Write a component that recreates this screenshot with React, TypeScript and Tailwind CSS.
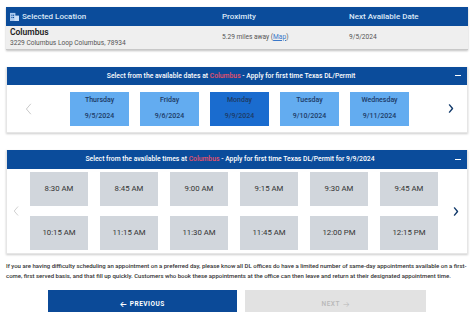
import React from "react";

const font = { fontFamily: "Roboto, 'Liberation Sans', sans-serif" };

function ChevLeft({ cls }: { cls: string }) {
  return (
    <svg viewBox="0 0 10 16" className={cls} fill="none" stroke="currentColor" strokeWidth="1.4" strokeLinecap="round" strokeLinejoin="round">
      <path d="M8 1 L2 8 L8 15" />
    </svg>
  );
}
function ChevRight({ cls }: { cls: string }) {
  return (
    <svg viewBox="0 0 10 16" className={cls} fill="none" stroke="currentColor" strokeWidth="2.4" strokeLinecap="round" strokeLinejoin="round">
      <path d="M2.5 2 L7.5 8 L2.5 14" />
    </svg>
  );
}

const dates = [
  { d: "Thursday", t: "9/5/2024" },
  { d: "Friday", t: "9/6/2024" },
  { d: "Monday", t: "9/9/2024", sel: true },
  { d: "Tuesday", t: "9/10/2024" },
  { d: "Wednesday", t: "9/11/2024" },
];

const times = [
  "8:30 AM", "8:45 AM", "9:00 AM", "9:15 AM", "9:30 AM", "9:45 AM",
  "10:15 AM", "11:15 AM", "11:30 AM", "11:45 AM", "12:00 PM", "12:15 PM",
];

export default function App() {
  return (
    <div className="w-[474px] h-[312px] overflow-hidden bg-white px-[6px] pt-[7px]" style={font}>
      {/* Location table */}
      <div className="shadow-[0_1px_2px_rgba(0,0,0,0.25)]">
        <div className="h-[19px] bg-[#0b4c9b] grid grid-cols-[212px_127px_1fr] items-center pl-[4px] text-[8px] font-medium text-[#dbe8f8]">
          <div className="flex items-center gap-[3px]">
            <svg viewBox="0 0 10 10" className="w-[9px] h-[9px]">
              <rect x="0" y="1" width="6" height="9" fill="#a9c8ee" />
              <rect x="5" y="4" width="5" height="6" fill="#c9ddf6" />
              <rect x="1.5" y="3" width="1.2" height="1.2" fill="#0b4c9b" />
              <rect x="3.3" y="3" width="1.2" height="1.2" fill="#0b4c9b" />
              <rect x="1.5" y="5.5" width="1.2" height="1.2" fill="#0b4c9b" />
              <rect x="3.3" y="5.5" width="1.2" height="1.2" fill="#0b4c9b" />
            </svg>
            <span>Selected Location</span>
          </div>
          <div>Proximity</div>
          <div>Next Available Date</div>
        </div>
        <div className="h-[24px] bg-[#efefef] grid grid-cols-[212px_127px_1fr] items-center pl-[4px] border-b border-[#c8c8c8]">
          <div className="flex flex-col leading-none">
            <span className="text-[8.5px] font-semibold text-[#222]">Columbus</span>
            <span className="text-[6.6px] text-[#555] mt-[3px]">3229 Columbus Loop Columbus, 78934</span>
          </div>
          <div className="text-[6.6px] text-[#555]">
            5.29 miles away (<span className="text-[#3a78c9] underline">Map</span>)
          </div>
          <div className="text-[6.6px] text-[#555]">9/5/2024</div>
        </div>
      </div>

      {/* Dates panel */}
      <div className="mt-[17px] shadow-[0_1px_2px_rgba(0,0,0,0.2)] border-x border-b border-[#e6e6e6]">
        <div className="h-[18px] bg-[#0b4c9b] relative flex items-center justify-center pr-[12px] text-[6.8px] font-medium text-white">
          <span>
            Select from the available dates at <span className="text-[#e8506a]">Columbus</span> - Apply for first time Texas DL/Permit
          </span>
          <span className="absolute right-[6px] top-[8px] w-[6px] h-[1.2px] bg-white" />
        </div>
        <div className="h-[47px] flex items-center">
          <div className="w-[63px] pl-[18px] text-[#c8c8c8]">
            <ChevLeft cls="w-[7px] h-[14px]" />
          </div>
          <div className="flex gap-[11px]">
            {dates.map((x) => (
              <div
                key={x.d}
                className={`w-[59px] h-[34px] flex flex-col items-center justify-center gap-[9px] text-[7px] font-medium leading-none text-[#1d3b66] ${x.sel ? "bg-[#1a6ccf]" : "bg-[#63acf0]"}`}
              >
                <span>{x.d}</span>
                <span>{x.t}</span>
              </div>
            ))}
          </div>
          <div className="flex-1 flex justify-end pr-[13px] text-[#123a6b]">
            <ChevRight cls="w-[6px] h-[11px]" />
          </div>
        </div>
      </div>

      {/* Times panel */}
      <div className="mt-[17px] shadow-[0_1px_2px_rgba(0,0,0,0.2)] border-x border-b border-[#e6e6e6]">
        <div className="h-[19px] bg-[#0b4c9b] relative flex items-center justify-center pr-[14px] text-[6.8px] font-medium text-white">
          <span>
            Select from the available times at <span className="text-[#e8506a]">Columbus</span> - Apply for first time Texas DL/Permit for 9/9/2024
          </span>
          <span className="absolute right-[6px] top-[9px] w-[6px] h-[1.2px] bg-white" />
        </div>
        <div className="h-[84px] flex items-center">
          <div className="w-[23px] pl-[6px] text-[#c8c8c8]">
            <ChevLeft cls="w-[6px] h-[12px]" />
          </div>
          <div className="grid grid-cols-[repeat(6,58px)] gap-x-[12px] gap-y-[10px]">
            {times.map((t) => (
              <div key={t} className="h-[34px] bg-[#d1d6dc] flex items-center justify-center text-[7.8px] text-[#333]">
                {t}
              </div>
            ))}
          </div>
          <div className="flex-1 flex justify-end pr-[8px] text-[#123a6b]">
            <ChevRight cls="w-[6px] h-[11px]" />
          </div>
        </div>
      </div>

      <p className="mt-[7px] text-[6px] font-medium leading-[9.5px] text-[#333]">
        If you are having difficulty scheduling an appointment on a preferred day, please know all DL offices do have a limited number of same-day appointments available on a first-come, first served basis, and that fill up quickly. Customers who book these appointments at the office can then leave and return at their designated appointment time.
      </p>

      <div className="mt-[10px] flex gap-[8px] pl-[42px]">
        <div className="w-[189px] h-[30px] bg-[#0b4a98] flex items-center justify-center gap-[3px] text-[6.5px] font-bold tracking-[0.5px] text-white">
          <span className="text-[8px] leading-none">&#x1F860;</span>
          <span>PREVIOUS</span>
        </div>
        <div className="w-[181px] h-[30px] bg-[#e2e2e2] flex items-center justify-center gap-[3px] text-[6.5px] font-medium tracking-[0.5px] text-[#b8b8b8]">
          <span>NEXT</span>
          <span className="text-[8px] leading-none">&#x1F862;</span>
        </div>
      </div>
    </div>
  );
}
